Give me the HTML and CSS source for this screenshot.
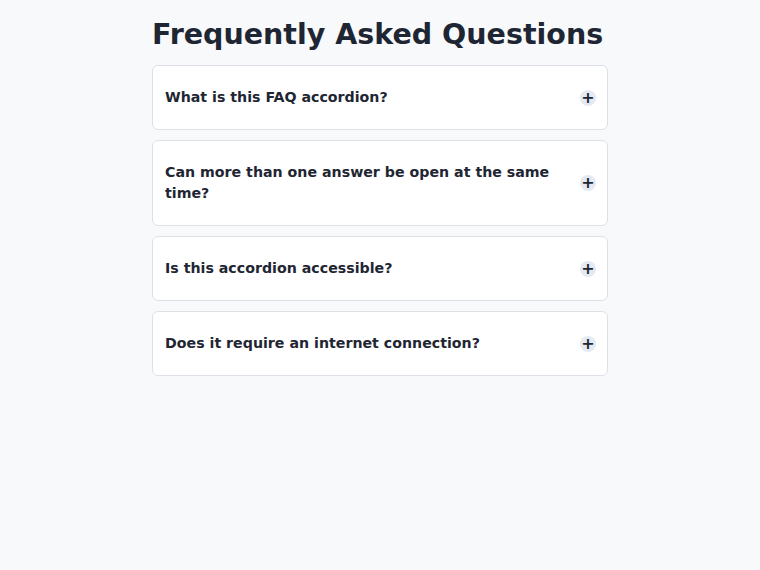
FILE: index.html
```html
<!DOCTYPE html>
<html>
<head>
  <meta charset="UTF-8">
  <link rel="stylesheet" href="styles.css">
  <title>FAQ</title>
</head>
<body>
  <div class="faq">
    <h1 class="faq-title">Frequently Asked Questions</h1>

    <div class="faq-list">
      <div class="faq-item">
        <button class="faq-question" aria-expanded="false">
          <span>What is this FAQ accordion?</span>
          <span class="faq-icon">+</span>
        </button>
      </div>

      <div class="faq-item">
        <button class="faq-question" aria-expanded="false">
          <span>Can more than one answer be open at the same time?</span>
          <span class="faq-icon">+</span>
        </button>
      </div>

      <div class="faq-item">
        <button class="faq-question" aria-expanded="false">
          <span>Is this accordion accessible?</span>
          <span class="faq-icon">+</span>
        </button>
      </div>

      <div class="faq-item">
        <button class="faq-question" aria-expanded="false">
          <span>Does it require an internet connection?</span>
          <span class="faq-icon">+</span>
        </button>
      </div>
    </div>
  </div>
</body>
</html>
```

FILE: styles.css
```css
body {
  margin: 0;
  background-color: #f8f9fb;
  color: #1f2633;
  font-family: "DejaVu Sans", sans-serif;
}

.faq {
  width: 60%;
  margin: 0 auto;
  padding-top: 18px;
}

.faq-title {
  font-size: 28.5px;
  margin: 0 0 13px 0;
  line-height: 1.2;
}

.faq-list {
  display: flex;
  flex-direction: column;
  gap: 10px;
}

.faq-item {
  background: #fff;
  border: 1px solid #dde1e7;
  border-radius: 6px;
}

.faq-question {
  display: flex;
  align-items: center;
  justify-content: space-between;
  gap: 16px;
  width: 100%;
  padding: 21px 11px 21px 12px;
  border: none;
  background: none;
  color: inherit;
  font-family: inherit;
  font-size: 14.2px;
  font-weight: bold;
  line-height: 21px;
  text-align: left;
  cursor: pointer;
}

.faq-icon {
  flex: none;
  display: flex;
  align-items: center;
  justify-content: center;
  width: 16px;
  height: 16px;
  border-radius: 50%;
  background-color: #e4e9f2;
  font-size: 16px;
  line-height: 1;
}
```
